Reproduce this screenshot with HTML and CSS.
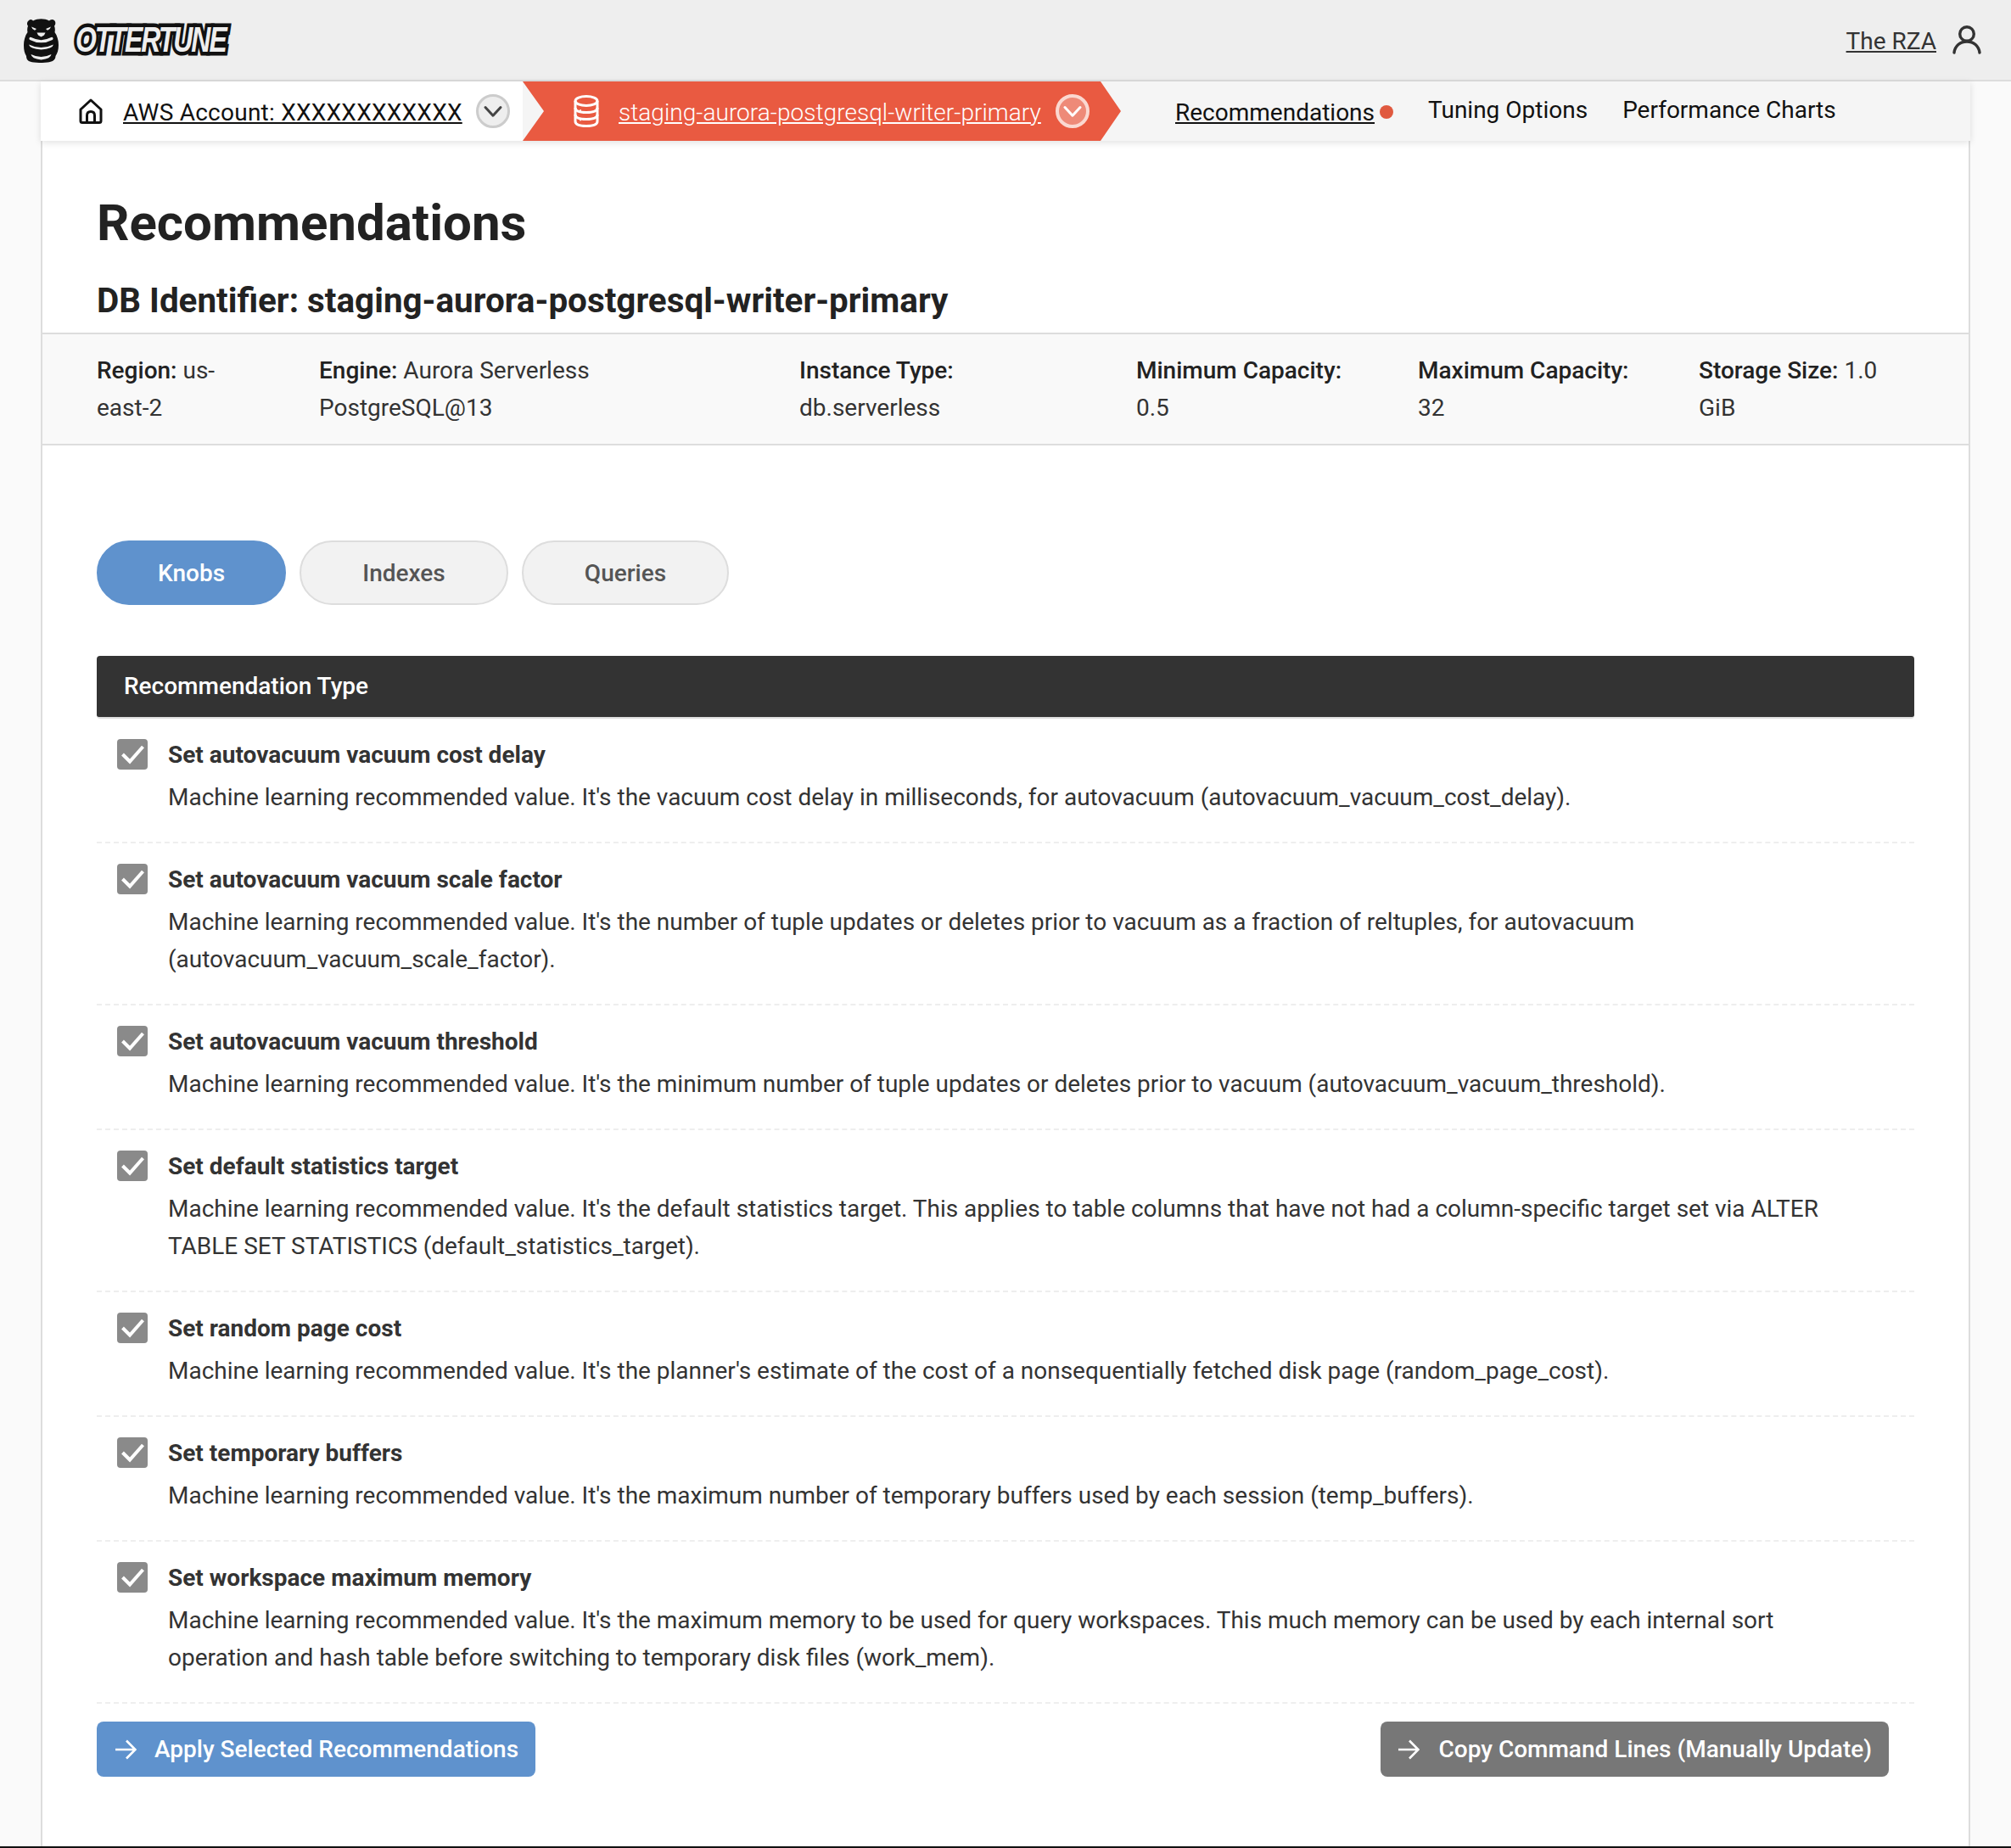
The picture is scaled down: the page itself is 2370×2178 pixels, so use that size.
FILE: index.html
```html
<!DOCTYPE html>
<html lang="en">
<head>
<meta charset="utf-8">
<title>Recommendations</title>
<link rel="stylesheet" href="styles.css">
</head>
<body>
<header class="topbar">
  <div class="brand">
    <svg class="otter" viewBox="0 0 41 53" aria-hidden="true">
      <path fill="#111" d="M6 3C8 1 10 2 11 3.500C16 0.500 25 0.500 30 3.500C31 2 34 1 36 3C38 5 37.500 8 36 9.500C37 12 37 15 36.500 17C39.500 21 41 27 41 32C41 38 39.500 42 37.500 45C37.500 50 33 52 28 52.500C23 53.200 17 53.200 12 52.500C6 52 3 50 3 45C1 42 0 38 0 32C0 27 1.500 21 4.500 17C4 15 4 12 5 9.500C3.500 8 3.500 5 6 3Z"/>
      <path fill="#eee" d="M9 10.500L15 13L13 14.800Q10 14 9 10.500ZM32 10.500L26 13L28 14.800Q31 14 32 10.500Z"/>
      <path fill="#eee" d="M15.500 17.500H25.500L24 20.500L20.500 22.500L17 20.500Z"/>
      <path fill="none" stroke="#eee" stroke-width="3.200" stroke-linecap="round" d="M8 24.500Q20.500 31 33 24.500"/>
      <path fill="#eee" d="M6 31.500Q20.500 38.500 35 31.500Q34 36.500 20.500 37.500Q7 36.500 6 31.500Z"/>
      <path fill="#eee" d="M8.500 43Q20.500 49 32.500 43Q32 48 20.500 49.500Q9 48 8.500 43Z"/>
    </svg>
    <span class="wordmark">OTTERTUNE</span>
  </div>
  <div class="user">
    <a class="user-name" href="#">The RZA</a>
    <svg class="user-icon" viewBox="0 0 34 34" aria-hidden="true">
      <circle cx="17" cy="10" r="8.300"/>
      <path d="M2 32C3 24 9 19 17 19C25 19 31 24 32 32"/>
    </svg>
  </div>
</header>

<div class="page">
  <nav class="crumbs">
    <div class="crumb-account">
      <svg class="home-icon" viewBox="0 0 28 30" aria-hidden="true">
        <path d="M2 13L14 2L26 13V26.500Q26 28.500 24 28.500H4Q2 28.500 2 26.500Z"/>
        <path d="M9.500 28.500V20Q9.500 15.500 14 15.500Q18.500 15.500 18.500 20V28.500"/>
      </svg>
      <a class="crumb-link" href="#">AWS Account: XXXXXXXXXXXX</a>
      <span class="chev chev-grey">
        <svg viewBox="0 0 20 20" aria-hidden="true"><path d="M4 7L10 13.500L16 7"/></svg>
      </span>
    </div>
    <div class="crumb-db">
      <svg class="db-icon" viewBox="0 0 30 38" aria-hidden="true">
        <ellipse cx="15" cy="7" rx="13" ry="5.500"/>
        <path d="M2 7V31Q2 36.500 15 36.500Q28 36.500 28 31V7"/>
        <path d="M2 15Q2 20.500 15 20.500Q28 20.500 28 15"/>
        <path d="M2 23Q2 28.500 15 28.500Q28 28.500 28 23"/>
        <circle class="db-dot" cx="8" cy="18" r="1"/>
        <circle class="db-dot" cx="8" cy="29.500" r="1"/>
      </svg>
      <a class="crumb-link crumb-link-db" href="#">staging-aurora-postgresql-writer-primary</a>
      <span class="chev chev-red">
        <svg viewBox="0 0 20 20" aria-hidden="true"><path d="M4 7L10 13.500L16 7"/></svg>
      </span>
    </div>
    <div class="crumb-tabs">
      <a class="nav-link nav-current" href="#">Recommendations</a><span class="nav-dot"></span>
      <a class="nav-link nav-tuning" href="#">Tuning Options</a>
      <a class="nav-link nav-perf" href="#">Performance Charts</a>
    </div>
  </nav>

  <main class="panel">
    <section class="heading">
      <h1>Recommendations</h1>
      <h2>DB Identifier: staging-aurora-postgresql-writer-primary</h2>
    </section>

    <section class="meta">
      <div><b>Region:</b> us-<br>east-2</div>
      <div><b>Engine:</b> Aurora Serverless<br>PostgreSQL@13</div>
      <div><b>Instance Type:</b><br>db.serverless</div>
      <div><b>Minimum Capacity:</b><br>0.5</div>
      <div><b>Maximum Capacity:</b><br>32</div>
      <div><b>Storage Size:</b> 1.0<br>GiB</div>
    </section>

    <section class="content">
      <div class="tabs">
        <button class="tab tab-active tab-knobs">Knobs</button>
        <button class="tab tab-indexes">Indexes</button>
        <button class="tab tab-queries">Queries</button>
      </div>

      <div class="table-head">Recommendation Type</div>

      <ul class="recs">
        <li class="rec">
          <span class="check"><svg viewBox="0 0 36 36" aria-hidden="true"><path d="M6.500 18L15 26.500L30.500 9"/></svg></span>
          <div class="rec-body">
            <h3>Set autovacuum vacuum cost delay</h3>
            <p>Machine learning recommended value. It's the vacuum cost delay in milliseconds, for autovacuum (autovacuum_vacuum_cost_delay).</p>
          </div>
        </li>
        <li class="rec">
          <span class="check"><svg viewBox="0 0 36 36" aria-hidden="true"><path d="M6.500 18L15 26.500L30.500 9"/></svg></span>
          <div class="rec-body">
            <h3>Set autovacuum vacuum scale factor</h3>
            <p>Machine learning recommended value. It's the number of tuple updates or deletes prior to vacuum as a fraction of reltuples, for autovacuum (autovacuum_vacuum_scale_factor).</p>
          </div>
        </li>
        <li class="rec">
          <span class="check"><svg viewBox="0 0 36 36" aria-hidden="true"><path d="M6.500 18L15 26.500L30.500 9"/></svg></span>
          <div class="rec-body">
            <h3>Set autovacuum vacuum threshold</h3>
            <p>Machine learning recommended value. It's the minimum number of tuple updates or deletes prior to vacuum (autovacuum_vacuum_threshold).</p>
          </div>
        </li>
        <li class="rec">
          <span class="check"><svg viewBox="0 0 36 36" aria-hidden="true"><path d="M6.500 18L15 26.500L30.500 9"/></svg></span>
          <div class="rec-body">
            <h3>Set default statistics target</h3>
            <p>Machine learning recommended value. It's the default statistics target. This applies to table columns that have not had a column-specific target set via ALTER TABLE SET STATISTICS (default_statistics_target).</p>
          </div>
        </li>
        <li class="rec">
          <span class="check"><svg viewBox="0 0 36 36" aria-hidden="true"><path d="M6.500 18L15 26.500L30.500 9"/></svg></span>
          <div class="rec-body">
            <h3>Set random page cost</h3>
            <p>Machine learning recommended value. It's the planner's estimate of the cost of a nonsequentially fetched disk page (random_page_cost).</p>
          </div>
        </li>
        <li class="rec">
          <span class="check"><svg viewBox="0 0 36 36" aria-hidden="true"><path d="M6.500 18L15 26.500L30.500 9"/></svg></span>
          <div class="rec-body">
            <h3>Set temporary buffers</h3>
            <p>Machine learning recommended value. It's the maximum number of temporary buffers used by each session (temp_buffers).</p>
          </div>
        </li>
        <li class="rec">
          <span class="check"><svg viewBox="0 0 36 36" aria-hidden="true"><path d="M6.500 18L15 26.500L30.500 9"/></svg></span>
          <div class="rec-body">
            <h3>Set workspace maximum memory</h3>
            <p>Machine learning recommended value. It's the maximum memory to be used for query workspaces. This much memory can be used by each internal sort operation and hash table before switching to temporary disk files (work_mem).</p>
          </div>
        </li>
      </ul>

      <div class="actions">
        <button class="action action-blue">
          <svg viewBox="0 0 26 26" aria-hidden="true"><path d="M1 13H24M14 2.500L24.500 13L14 23.500"/></svg>
          Apply Selected Recommendations
        </button>
        <button class="action action-grey">
          <svg viewBox="0 0 26 26" aria-hidden="true"><path d="M1 13H24M14 2.500L24.500 13L14 23.500"/></svg>
          Copy Command Lines (Manually Update)
        </button>
      </div>
    </section>
  </main>
</div>
</body>
</html>
```
FILE: styles.css
```css
* { box-sizing: border-box; }
html, body { margin: 0; padding: 0; }
body {
  height: 2178px;
  overflow: hidden;
  background: #fafafa;
  font-family: Roboto, "Liberation Sans", sans-serif;
  font-size: 28px;
  line-height: 44px;
  color: #333;
  border-bottom: 2px solid #111;
}
a { color: inherit; }

.topbar {
  height: 96px;
  background: #eee;
  border-bottom: 2px solid #ddd;
  display: flex;
  align-items: center;
  justify-content: space-between;
  padding: 0 35px 0 28px;
}
.brand { display: flex; align-items: center; gap: 20px; }
.otter { width: 41px; height: 53px; display: block; }
.wordmark {
  font-family: "Liberation Sans", sans-serif;
  font-style: italic;
  font-weight: 700;
  font-size: 42px;
  line-height: 40px;
  letter-spacing: -2.6px;
  color: #eee;
  -webkit-text-stroke: 9px #111;
  paint-order: stroke fill;
  transform: scaleX(.76);
  transform-origin: left center;
}
.user { display: flex; align-items: center; gap: 19px; }
.user-name { color: #333; margin-top: 3px; }
.user-icon { width: 34px; height: 34px; fill: none; stroke: #333; stroke-width: 3.4; stroke-linecap: round; }

.page { padding: 0 48px; }
.crumbs {
  height: 70px;
  display: flex;
  align-items: stretch;
  background: #f5f5f5;
  box-shadow: 0 2px 8px rgba(0,0,0,.12);
  position: relative;
}
.crumb-account {
  display: flex;
  align-items: center;
  background: #fff;
  width: 568px;
  padding-left: 45px;
  color: #111;
}
.home-icon { width: 28px; height: 30px; fill: none; stroke: #111; stroke-width: 3; stroke-linejoin: round; margin-right: 24px; }
.crumb-link { color: #111; margin-top: 3px; letter-spacing: .24px; }
.chev {
  width: 40px; height: 40px; border-radius: 50%;
  display: flex; align-items: center; justify-content: center;
  margin-left: 16px;
  flex: none;
}
.chev svg { width: 30px; height: 30px; flex: none; fill: none; stroke-width: 2; stroke-linecap: round; stroke-linejoin: round; }
.chev-grey { background: #eee; border: 3px solid #ccc; }
.chev-grey svg { stroke: #444; }
.chev-red { background: #ee8a78; border: 4px solid #fbd8d0; }
.chev-red svg { stroke: #fff; }

.crumb-db {
  display: flex;
  align-items: center;
  width: 705px;
  background: #e95a41;
  clip-path: polygon(0 0, 681px 0, 705px 50%, 681px 100%, 0 100%, 25px 50%);
  padding-left: 60px;
  color: #fff;
}
.db-icon { width: 30px; height: 38px; fill: none; stroke: #fff; stroke-width: 3; margin-right: 23px; flex: none; }
.db-dot { fill: #fff; stroke: none; }
.crumb-link-db { color: #fff; font-weight: 300; letter-spacing: .05px; }
.crumb-db .chev { margin-left: 17px; }

.crumb-tabs { display: flex; align-items: center; padding-left: 64px; color: #111; }
.nav-link { text-decoration: none; color: #111; }
.nav-current { text-decoration: underline; margin-top: 4px; }
.nav-dot { width: 16px; height: 16px; border-radius: 50%; background: #e0593f; margin-left: 6px; margin-top: 2px; }
.nav-tuning { margin-left: 41px; margin-bottom: 3px; }
.nav-perf { margin-left: 41px; margin-bottom: 3px; }

.panel {
  background: #fff;
  border-left: 2px solid #ddd;
  border-right: 2px solid #ddd;
  height: 2010px;
}
.heading { padding: 65px 64px 0; height: 226px; }
h1 { margin: 0; font-size: 60px; line-height: 64px; font-weight: 700; color: #222; }
h2 { margin: 36px 0 0; font-size: 40.4px; line-height: 48px; font-weight: 700; color: #222; }

.meta {
  height: 133px;
  background: #f9f9f9;
  border-top: 2px solid #ddd;
  border-bottom: 2px solid #ddd;
  padding: 21px 64px 0;
  display: grid;
  grid-template-columns: 262px 566px 397px 332px 331px 1fr;
}
.meta b { font-weight: 500; color: #222; }

.content { padding: 112px 64px 0; }
.tabs { display: flex; gap: 16px; }
.tab {
  height: 76px;
  border-radius: 38px;
  border: 2px solid #ddd;
  background: #f2f2f2;
  color: #555;
  font: 500 28px Roboto, sans-serif;
  padding: 0;
}
.tab-knobs { width: 223px; }
.tab-indexes { width: 246px; }
.tab-queries { width: 244px; }
.tab-active { background: #5f92cd; border-color: #5f92cd; color: #fff; }

.table-head {
  margin-top: 60px;
  height: 74px;
  background: #333;
  border-bottom: 2px solid #ddd;
  border-radius: 4px;
  color: #fff;
  padding: 0 32px;
  line-height: 72px;
  font-weight: 500;
}
.recs { list-style: none; margin: 0; padding: 0; }
.rec {
  display: flex;
  gap: 24px;
  padding: 24px 24px 30px;
  border-bottom: 2px dashed #eee;
}
.check {
  width: 36px; height: 36px; border-radius: 4px; background: #8a8a8a; flex: none;
  display: block;
}
.check svg { display: block; width: 36px; height: 36px; fill: none; stroke: #fff; stroke-width: 4; }
.rec-body { max-width: 2010px; }
h3 { margin: -3px 0 6px; font-size: 28px; line-height: 44px; font-weight: 700; color: #333; }
.rec p { margin: 0; font-size: 27.97px; color: #333; }

.actions { display: flex; justify-content: space-between; margin-top: 21px; padding-right: 30px; }
.action {
  height: 65px;
  border: 0;
  border-radius: 8px;
  color: #fff;
  font: 500 28px Roboto, sans-serif;
  display: flex;
  align-items: center;
  padding: 0 20px;
}
.action svg { width: 26px; height: 26px; fill: none; stroke: #fff; stroke-width: 2.600; flex: none; }
.action-blue { background: #5f92cd; gap: 21px; padding-left: 21px; }
.action-grey { background: #777; gap: 22px; }
```
